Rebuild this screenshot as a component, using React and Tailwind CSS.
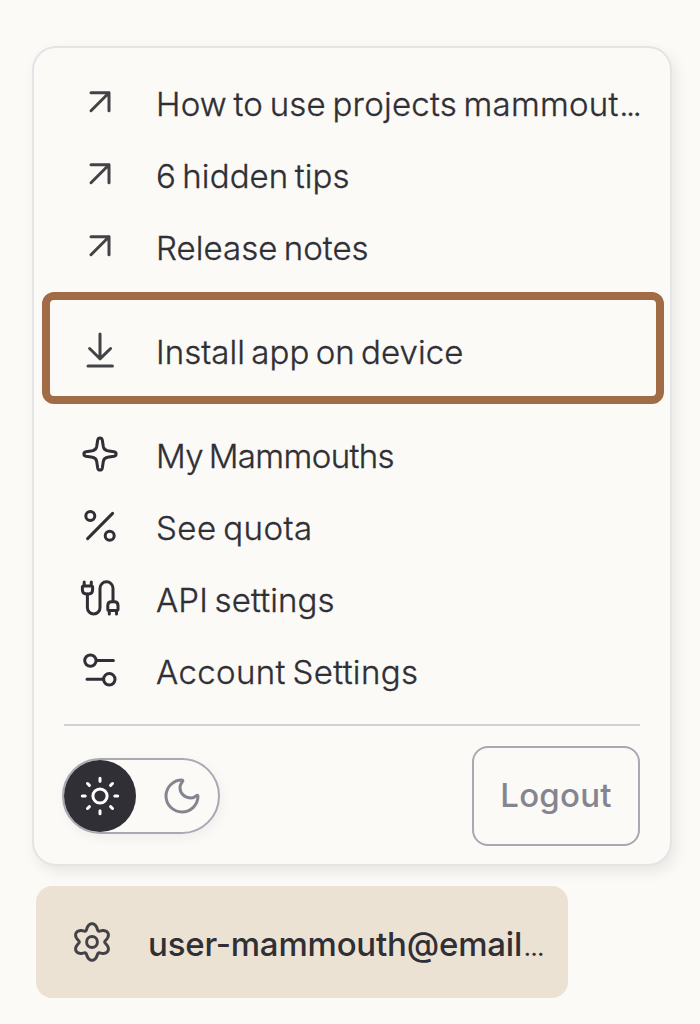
import React from 'react';

const Icon = ({ children, className = 'text-[#2f2f35]' }) => (
  <svg
    className={`size-10 shrink-0 ${className}`}
    viewBox="0 0 40 40"
    fill="none"
    stroke="currentColor"
    strokeWidth="3"
    strokeLinecap="round"
    strokeLinejoin="round"
  >
    {children}
  </svg>
);

const ArrowIcon = () => (
  <Icon className="text-[#434347]">
    <path d="M11 10.7H29V28.7M29 10.7L11 28.7" />
  </Icon>
);

const DownloadIcon = () => (
  <Icon className="text-[#434347]">
    <path d="M20 4V28.8M9.6 18.5L20 28.8L30.6 18.5M8 36H32.4" />
  </Icon>
);

const SparkleIcon = () => (
  <Icon>
    <path d="M17.7 6C18.2 3.2 21.8 3.2 22.3 6L23.3 12.5C23.8 15.2 24.8 16.2 27.5 16.7L34 17.7C36.8 18.2 36.8 21.8 34 22.3L27.5 23.3C24.8 23.8 23.8 24.8 23.3 27.5L22.3 34C21.8 36.8 18.2 36.8 17.7 34L16.7 27.5C16.2 24.8 15.2 23.8 12.5 23.3L6 22.3C3.2 21.8 3.2 18.2 6 17.7L12.5 16.7C15.2 16.2 16.2 15.2 16.7 12.5Z" />
  </Icon>
);

const PercentIcon = () => (
  <Icon>
    <circle cx="10.3" cy="10" r="4.5" />
    <circle cx="29.7" cy="29.7" r="4.5" />
    <path d="M7.6 32.6L32.6 7.4" />
  </Icon>
);

const CableIcon = () => (
  <Icon>
    <path d="M4.2 4V7.9M11.3 4V7.9M3.6 7.9H11.4Q12.6 7.9 12.6 9.1V12.1Q12.6 15.9 8.8 15.9H6.2Q2.4 15.9 2.4 12.1V9.1Q2.4 7.9 3.6 7.9Z" />
    <path d="M7.4 16V29.7A6.3 6.3 0 0 0 20 29.7V10.3A6.5 6.5 0 0 1 33 10.3V23" />
    <path d="M29.3 36V32.6M36.5 36V32.6M29 32.4H36.8Q38 32.4 38 31.2V27.5Q38 23.7 34.2 23.7H31.6Q27.8 23.7 27.8 27.5V31.2Q27.8 32.4 29 32.4Z" />
  </Icon>
);

const SlidersIcon = () => (
  <Icon>
    <circle cx="10.4" cy="10.6" r="5.7" />
    <path d="M16.3 10.6H33.4M7 29.2H23.4" />
    <circle cx="29.3" cy="29.3" r="5.7" />
  </Icon>
);

const SunIcon = () => (
  <Icon className="text-white">
    <circle cx="20" cy="20" r="7.1" />
    <path d="M20 2.3V5.2M20 34.8V37.7M2.3 20H5.2M34.8 20H37.7M7.5 7.5L9.4 9.4M30.6 30.6L32.5 32.5M7.5 32.5L9.4 30.6M30.6 9.4L32.5 7.5" />
  </Icon>
);

const MoonIcon = () => (
  <Icon className="text-[#858590]">
    <path d="M19.9 4A16 16 0 1 0 36 20.1C36 18.8 35 19 34.2 19.8C33 21.2 31.2 22 29 22C22.5 22 17.8 17.5 18 11C18 9 19 7.5 20.2 6C21.2 5 21 4 19.9 4Z" />
  </Icon>
);

// six soft teeth around the centre
const gearPoints = Array.from({ length: 144 }, (_, i) => {
  const a = (i / 144) * Math.PI * 2;
  const r = 15.5 + 2.8 * Math.cos(6 * a);
  const t = a + 0.04 * Math.sin(6 * a);
  return `${(20 + r * Math.sin(t)).toFixed(2)},${(20 - r * Math.cos(t)).toFixed(2)}`;
}).join(' ');

const GearIcon = () => (
  <Icon className="text-[#434347]">
    <polygon points={gearPoints} />
    <circle cx="20" cy="20" r="5.4" />
  </Icon>
);

const Ellipsis = () => <span className="ml-0.5 text-[21px] leading-none font-semibold tracking-[-0.5px]">…</span>;

const MenuItem = ({ icon, label, tracking, truncated }) => (
  <div className="flex h-[72px] items-center pr-6 pl-[46px]">
    <div className="pb-1">{icon}</div>
    <span className={`ml-9 text-[33px] leading-10 font-light whitespace-nowrap [-webkit-text-stroke:0.35px] [word-spacing:-3px] ${tracking}`}>
      {label}
      {truncated && <Ellipsis />}
    </span>
  </div>
);

const App = () => (
  <div className="h-[1024px] w-[700px] overflow-hidden bg-[#fbfaf6] pt-[46px] font-[Inter,sans-serif] text-[#2f2f35]">
    <div className="ml-8 h-[820px] w-[640px] rounded-[24px] border-2 border-[#e4e4e7] bg-[#fbfaf6] pt-5 shadow-[4px_6px_14px_rgba(0,0,0,0.08)]">
      <MenuItem icon={<ArrowIcon />} label="How to use projects mammout" tracking="tracking-[0.24px]" truncated />
      <MenuItem icon={<ArrowIcon />} label="6 hidden tips" tracking="tracking-[0.1px]" />
      <MenuItem icon={<ArrowIcon />} label="Release notes" tracking="tracking-[0.05px]" />

      <div className="mt-2 mr-1.5 ml-2 h-28 rounded-xl border-8 border-[#a16c45] pt-4">
        <div className="-ml-4">
          <MenuItem icon={<DownloadIcon />} label="Install app on device" tracking="tracking-[0.05px]" />
        </div>
      </div>

      <div className="mt-4">
        <MenuItem icon={<SparkleIcon />} label="My Mammouths" tracking="tracking-[-0.6px]" />
        <MenuItem icon={<PercentIcon />} label="See quota" tracking="tracking-[0.45px]" />
        <MenuItem icon={<CableIcon />} label="API settings" tracking="tracking-[0.15px]" />
        <MenuItem icon={<SlidersIcon />} label="Account Settings" tracking="tracking-[0.37px]" />
      </div>

      <div className="mx-[30px] mt-4 h-0.5 bg-[#d0cfd5]" />

      <div className="flex items-center justify-between pt-5 pr-[30px] pl-7">
        <div className="flex h-[76px] w-[158px] items-center rounded-full border-2 border-[#a9a9b4] shadow-[2px_4px_12px_rgba(0,0,0,0.05)]">
          <div className="flex size-[72px] items-center justify-center rounded-full bg-[#2f2f35]">
            <SunIcon />
          </div>
          <div className="ml-[26px]">
            <MoonIcon />
          </div>
        </div>
        <button className="h-[100px] w-[168px] rounded-2xl border-2 border-[#a9a9b4] text-[33px] font-medium tracking-[0.2px] text-[#858590]">
          Logout
        </button>
      </div>
    </div>

    <div className="mt-5 ml-9 flex h-28 w-[532px] items-center rounded-2xl bg-[#ece2d4] pl-9">
      <GearIcon />
      <span className="ml-9 pt-1 text-[33px] leading-10 font-medium tracking-[-0.2px] whitespace-nowrap">
        user-mammouth@email
        <Ellipsis />
      </span>
    </div>
  </div>
);

export default App;
